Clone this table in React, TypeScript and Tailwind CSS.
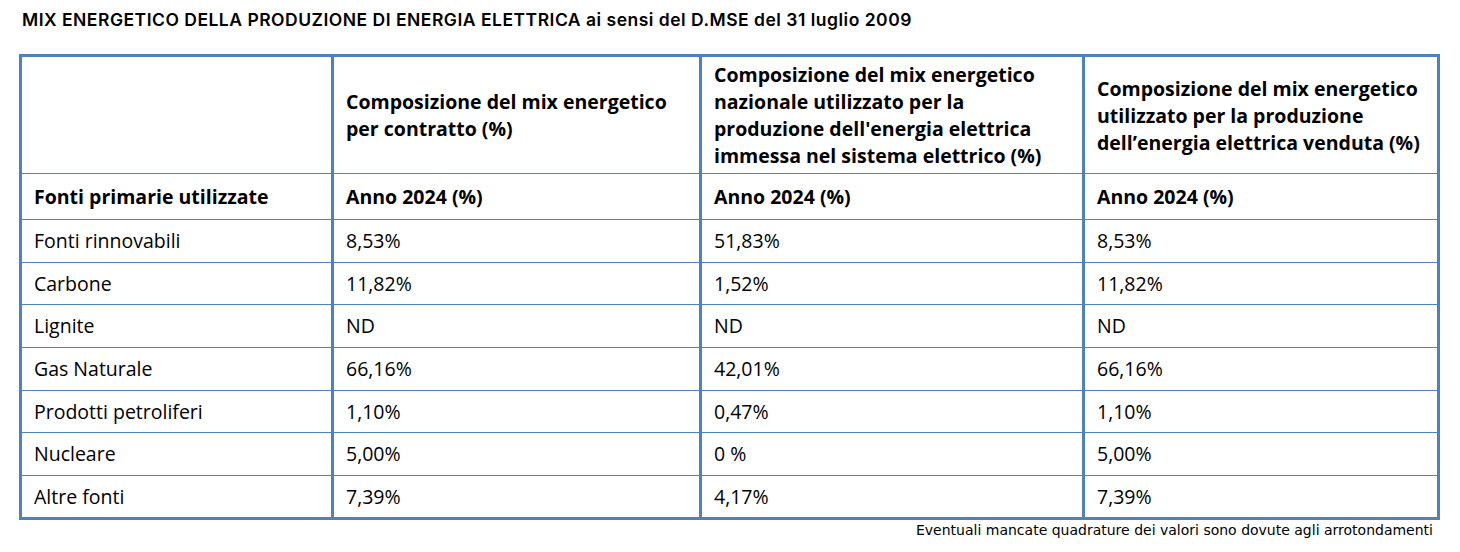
const rows = [
  { label: 'Fonti rinnovabili', a: '8,53%', b: '51,83%', c: '8,53%', h: 'h-[43px]' },
  { label: 'Carbone', a: '11,82%', b: '1,52%', c: '11,82%', h: 'h-[42px]' },
  { label: 'Lignite', a: 'ND', b: 'ND', c: 'ND', h: 'h-[43px]' },
  { label: 'Gas Naturale', a: '66,16%', b: '42,01%', c: '66,16%', h: 'h-[43px]' },
  { label: 'Prodotti petroliferi', a: '1,10%', b: '0,47%', c: '1,10%', h: 'h-[42px]' },
  { label: 'Nucleare', a: '5,00%', b: '0 %', c: '5,00%', h: 'h-[43px]' },
  { label: 'Altre fonti', a: '7,39%', b: '4,17%', c: '7,39%', h: 'h-[41px]', last: true },
]

const cols = 'grid grid-cols-[309px_368px_383px_355px]'
const cell = 'flex items-center pl-[12px] pr-2'
const sep = 'border-l-[3px] border-[#4f81bd]'

export default function App() {
  return (
    <div className="w-[1460px] h-[552px] bg-white text-black">
      <h1 className="pl-[22px] pt-[10px] h-[54px] text-[17.5px] leading-[20px] font-semibold font-['Inter',sans-serif] tracking-[0.5px] whitespace-nowrap">
        MIX ENERGETICO DELLA PRODUZIONE DI ENERGIA ELETTRICA ai sensi del D.MSE del 31 luglio 2009
      </h1>

      <div className="ml-[19px] w-[1421px] border-[3px] border-[#4f81bd] font-['Open_Sans',sans-serif] text-[19.5px]">
        {/* header */}
        <div className={`${cols} h-[117px] border-b border-[#4f81bd]`}>
          <div className={cell}></div>
          <div className={`${cell} ${sep} font-bold leading-[27px] pl-[11px] whitespace-nowrap`}>
            Composizione del mix energetico<br />per contratto (%)
          </div>
          <div className={`${cell} ${sep} font-bold leading-[27px] pl-[11px] whitespace-nowrap`}>
            Composizione del mix energetico<br />nazionale utilizzato per la<br />produzione dell'energia elettrica<br />immessa nel sistema elettrico (%)
          </div>
          <div className={`${cell} ${sep} font-bold leading-[27px] pl-[8px] whitespace-nowrap`}>
            Composizione del mix energetico<br />utilizzato per la produzione<br />dell’energia elettrica venduta (%)
          </div>
        </div>

        <div className={`${cols} h-[46px] border-b border-[#4f81bd] font-bold`}>
          <div className={cell}>Fonti primarie utilizzate</div>
          <div className={`${cell} ${sep} pl-[11px]`}>Anno 2024 (%)</div>
          <div className={`${cell} ${sep} pl-[11px]`}>Anno 2024 (%)</div>
          <div className={`${cell} ${sep} pl-[11px]`}>Anno 2024 (%)</div>
        </div>

        {rows.map((r) => (
          <div key={r.label} className={`${cols} ${r.h} ${r.last ? '' : 'border-b border-[#4f81bd]'}`}>
            <div className={cell}>{r.label}</div>
            <div className={`${cell} ${sep} pl-[11px]`}>{r.a}</div>
            <div className={`${cell} ${sep} pl-[11px]`}>{r.b}</div>
            <div className={`${cell} ${sep} pl-[11px]`}>{r.c}</div>
          </div>
        ))}
      </div>

      <p className="w-[1433px] pt-[1px] text-right text-[14px] leading-[18px] font-['DejaVu_Sans',sans-serif]">
        Eventuali mancate quadrature dei valori sono dovute agli arrotondamenti
      </p>
    </div>
  )
}
